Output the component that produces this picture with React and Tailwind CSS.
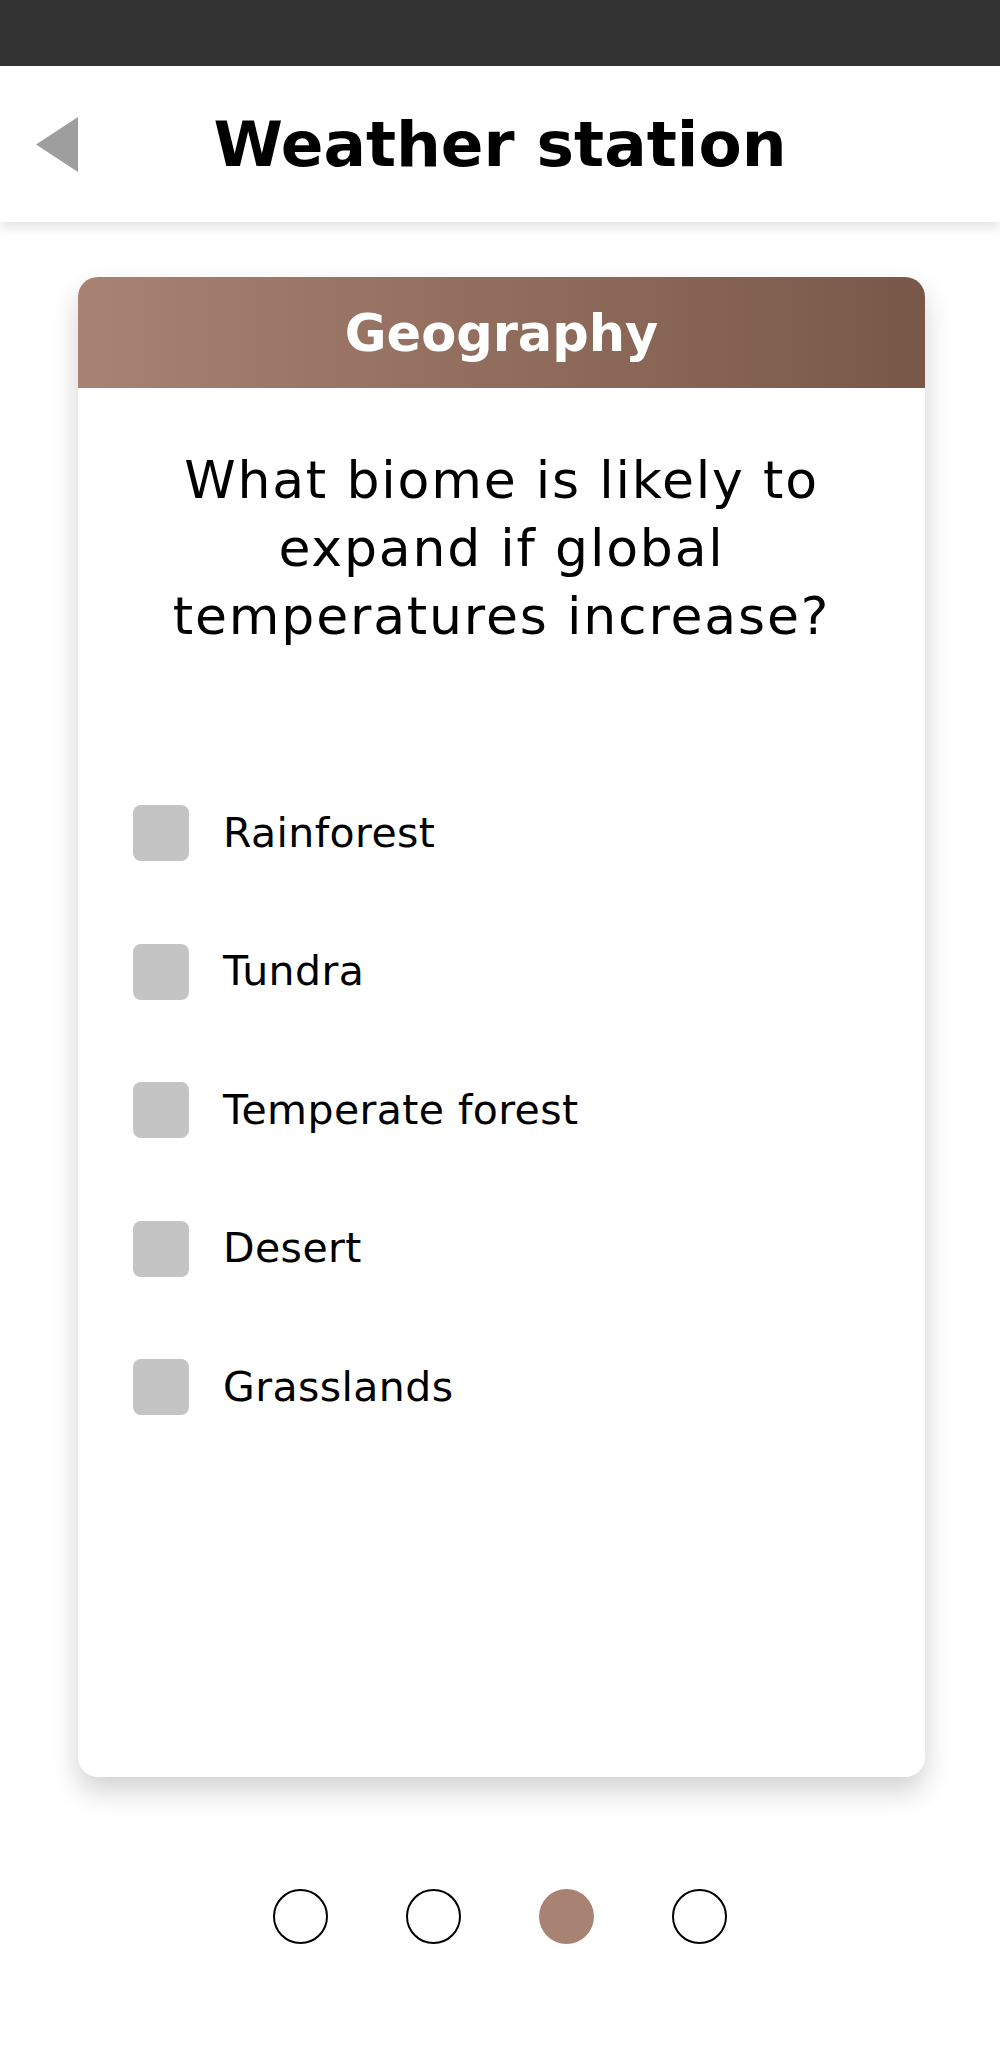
import React from "react";

const options = ["Rainforest", "Tundra", "Temperate forest", "Desert", "Grasslands"];

export default function App() {
  return (
    <div className="w-[1000px] min-h-[2056px] bg-white font-['DejaVu_Sans',sans-serif] text-black">
      <div className="h-[66px] bg-[#333333]" />
      <header className="relative z-10 h-[156px] bg-white flex items-center pl-[36px] shadow-[0_6px_10px_rgba(0,0,0,0.1)]">
        <svg width="42" height="55" viewBox="0 0 42 55" className="shrink-0">
          <polygon points="42,0 42,55 0,27.5" fill="#9e9e9e" />
        </svg>
        <h1 className="flex-1 text-center text-[63px] leading-none font-bold mr-[78px]">
          Weather station
        </h1>
      </header>

      <main className="pt-[55px]">
        <div className="ml-[78px] w-[847px] h-[1500px] rounded-[20px] bg-white shadow-[0_14px_28px_rgba(0,0,0,0.18)] overflow-hidden flex flex-col">
          <div className="h-[111px] bg-linear-to-r from-[#a88272] to-[#7a5849] flex items-center justify-center">
            <span className="text-white text-[51px] font-bold leading-none pt-[2px]">Geography</span>
          </div>
          <div className="pt-[58px]">
            <p className="text-center text-[52px] leading-[68px] tracking-[0.035em]">
              What biome is likely to
              <br />
              expand if global
              <br />
              temperatures increase?
            </p>
            <ul className="mt-[155px] pl-[55px] flex flex-col gap-[82.5px]">
              {options.map((o) => (
                <li key={o} className="flex items-center h-[56px]">
                  <span className="w-[56px] h-[56px] rounded-[8px] bg-[#c4c4c4] shrink-0" />
                  <span className="ml-[34px] text-[41px] leading-none tracking-[0.01em]">{o}</span>
                </li>
              ))}
            </ul>
          </div>
        </div>

        <div className="mt-[112px] flex justify-center gap-[78px]">
          <span className="w-[55px] h-[55px] rounded-full border-2 border-black" />
          <span className="w-[55px] h-[55px] rounded-full border-2 border-black" />
          <span className="w-[55px] h-[55px] rounded-full bg-[#a88273]" />
          <span className="w-[55px] h-[55px] rounded-full border-2 border-black" />
        </div>
      </main>
    </div>
  );
}
